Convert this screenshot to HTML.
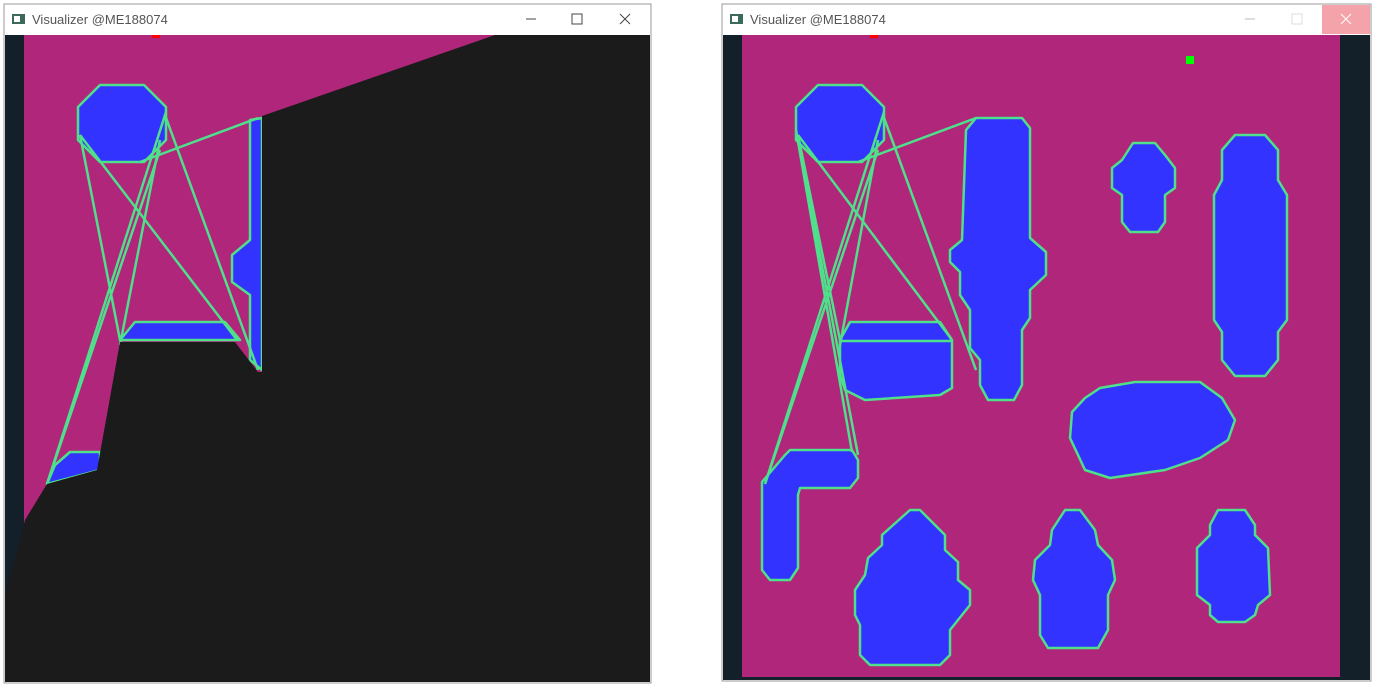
<!DOCTYPE html>
<html><head><meta charset="utf-8"><style>
html,body{margin:0;padding:0;background:#fff;width:1374px;height:685px;overflow:hidden}
svg{display:block}
text{font-family:"Liberation Sans",sans-serif}
</style></head><body>
<svg width="1374" height="685" viewBox="0 0 1374 685" xmlns="http://www.w3.org/2000/svg">
<rect width="1374" height="685" fill="#fff"/>
<!-- LEFT WINDOW -->
<rect x="4" y="4" width="647" height="679" fill="none" stroke="#999" stroke-width="1"/>
<rect x="5" y="5" width="645" height="30" fill="#fff"/>
<rect x="12" y="14" width="13" height="10" fill="#3b6a5a"/><rect x="14" y="16" width="6" height="6" fill="#fff"/>
<text x="32" y="24" font-size="13" fill="#555">Visualizer @ME188074</text>
<line x1="526" y1="19" x2="536" y2="19" stroke="#444"/>
<rect x="572" y="14" width="10" height="10" fill="none" stroke="#444"/>
<path d="M620 14 L630 24 M630 14 L620 24" stroke="#444"/>
<rect x="5" y="35" width="645" height="647" fill="#b0267a"/>
<rect x="5" y="35" width="19" height="647" fill="#13202a"/>
<rect x="152" y="35" width="8" height="3" fill="#f00"/>
<g fill="#3333ff" stroke="#4ee08a" stroke-width="2.5" stroke-linejoin="round">
<polygon points="100,85 144,85 166,107 166,140 144,162 100,162 78,140 78,107"/>
<polygon points="135,322 225,322 240,340 120,340"/>
<polygon points="70,452 100,452 100,470 47,484 55,465"/>
<polygon points="250,120 262,118 262,370 250,360 250,295 232,282 232,255 250,240"/>
</g>
<g stroke="#4ee08a" stroke-width="2.5" fill="none">
<line x1="140" y1="162" x2="258" y2="118"/>
<line x1="80" y1="135" x2="120" y2="340"/>
<line x1="80" y1="135" x2="237" y2="340"/>
<line x1="165" y1="115" x2="258" y2="370"/>
<line x1="160" y1="140" x2="120" y2="345"/>
<line x1="166" y1="112" x2="47" y2="484"/>
<line x1="160" y1="150" x2="47" y2="484"/>
</g>
<polygon points="262,116 495,35 650,35 650,682 5,682 5,595 25,520 47,484 97,470 120,342 235,342 258,372 262,372" fill="#1b1b1b"/>

<!-- RIGHT WINDOW -->
<rect x="722" y="4" width="649" height="677" fill="none" stroke="#999" stroke-width="1"/>
<rect x="723" y="5" width="647" height="30" fill="#fff"/>
<rect x="1322" y="5" width="48" height="29" fill="#f4a3aa"/>
<path d="M1341 14 L1351 24 M1351 14 L1341 24" stroke="#fff"/>
<line x1="1245" y1="19" x2="1255" y2="19" stroke="#bbb"/>
<rect x="1292" y="14" width="10" height="10" fill="none" stroke="#ddd"/>
<rect x="730" y="14" width="13" height="10" fill="#3b6a5a"/><rect x="732" y="16" width="6" height="6" fill="#fff"/>
<text x="750" y="24" font-size="13" fill="#555">Visualizer @ME188074</text>
<rect x="723" y="35" width="647" height="645" fill="#13202a"/>
<rect x="742" y="35" width="598" height="642" fill="#b0267a"/>
<rect x="870" y="35" width="8" height="3" fill="#f00"/>
<rect x="1186" y="56" width="8" height="8" fill="#00ff00"/>
<g fill="#3333ff" stroke="#4ee08a" stroke-width="2.5" stroke-linejoin="round">
<polygon points="818,85 862,85 884,107 884,140 862,162 818,162 796,140 796,107"/>
<polygon points="976,118 1022,118 1030,128 1030,238 1046,252 1046,275 1030,290 1030,318 1022,330 1022,385 1014,400 988,400 980,385 980,360 970,348 970,310 960,295 960,272 950,262 950,250 962,240 966,130"/>
<polygon points="850,322 940,322 952,340 952,388 940,395 865,400 845,390 840,375 840,340"/>
<polygon points="1133,143 1155,143 1165,155 1175,168 1175,188 1165,195 1165,222 1158,232 1130,232 1122,222 1122,195 1112,188 1112,168 1122,160"/>
<polygon points="1235,135 1265,135 1278,150 1278,180 1287,195 1287,320 1278,332 1278,360 1265,376 1235,376 1222,360 1222,332 1214,320 1214,195 1222,180 1222,150"/>
<polygon points="1100,388 1135,382 1200,382 1222,398 1235,420 1228,440 1200,458 1165,470 1110,478 1085,470 1078,455 1070,438 1072,412 1085,398"/>
<polygon points="790,450 852,450 858,460 858,478 850,488 800,488 798,495 798,568 790,580 770,580 762,570 762,482 785,455"/>
<polygon points="910,510 920,510 945,535 945,550 958,562 958,580 970,590 970,605 950,630 950,655 940,665 870,665 860,655 860,625 855,615 855,590 865,575 868,558 882,545 882,535"/>
<polygon points="1065,510 1080,510 1095,530 1098,545 1112,560 1115,580 1108,595 1108,630 1098,648 1048,648 1040,635 1040,595 1033,580 1035,560 1050,545 1052,530"/>
<polygon points="1218,510 1245,510 1255,525 1255,535 1268,548 1270,595 1258,605 1255,615 1245,622 1218,622 1210,615 1210,605 1197,595 1197,548 1210,535 1210,525"/>
</g>
<g stroke="#4ee08a" stroke-width="2.5" fill="none">
<line x1="840" y1="341" x2="952" y2="341"/>
<line x1="858" y1="162" x2="976" y2="118"/>
<line x1="798" y1="135" x2="840" y2="340"/>
<line x1="798" y1="135" x2="952" y2="340"/>
<line x1="883" y1="115" x2="976" y2="370"/>
<line x1="878" y1="140" x2="840" y2="345"/>
<line x1="884" y1="112" x2="765" y2="484"/>
<line x1="878" y1="150" x2="765" y2="484"/>
<line x1="798" y1="140" x2="858" y2="455"/>
<line x1="796" y1="130" x2="852" y2="452"/>
</g>
</svg>
</body></html>
